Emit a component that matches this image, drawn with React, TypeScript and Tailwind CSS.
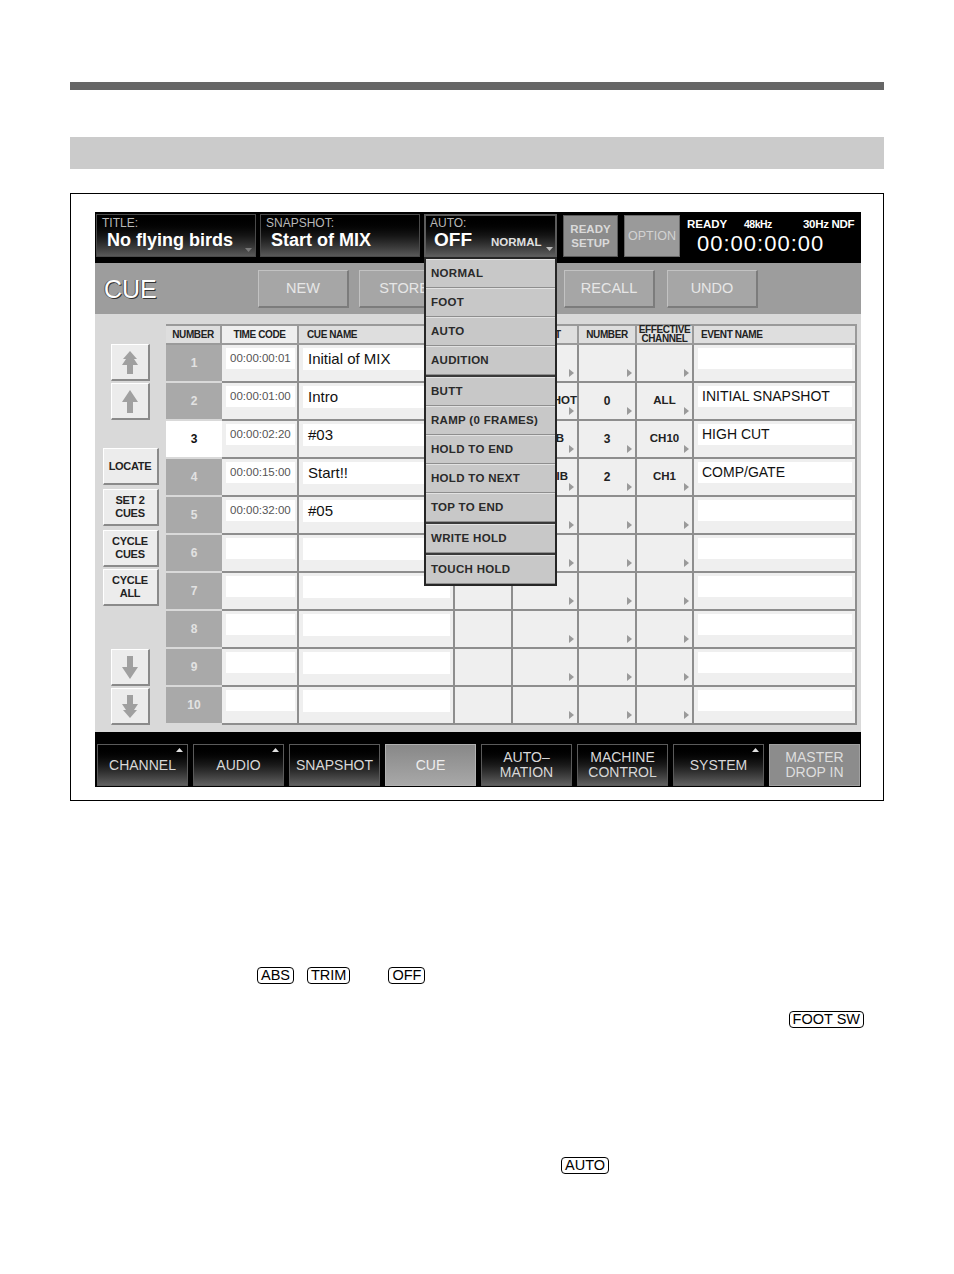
import React from "react";

const cols = "grid grid-cols-[56px_77px_156px_58px_66px_58px_57px_163px]";

const timeCodes = ["00:00:00:01", "00:00:01:00", "00:00:02:20", "00:00:15:00", "00:00:32:00"];
const cueNames = ["Initial of MIX", "Intro", "#03", "Start!!", "#05"];

interface EventRow {
  type: string;
  number: string;
  channel: string;
  name: string;
}

const events: Record<number, EventRow> = {
  2: { type: "SNAPSHOT", number: "0", channel: "ALL", name: "INITIAL SNAPSHOT" },
  3: { type: "EQ LIB", number: "3", channel: "CH10", name: "HIGH CUT" },
  4: { type: "DYN LIB", number: "2", channel: "CH1", name: "COMP/GATE" },
};

const menu = [
  ["NORMAL", "FOOT", "AUTO", "AUDITION"],
  ["BUTT", "RAMP (0 FRAMES)", "HOLD TO END", "HOLD TO NEXT", "TOP TO END"],
  ["WRITE HOLD"],
  ["TOUCH HOLD"],
];

const tabs = [
  { label: ["CHANNEL"], mark: true, style: "dark" },
  { label: ["AUDIO"], mark: true, style: "dark" },
  { label: ["SNAPSHOT"], mark: false, style: "dark" },
  { label: ["CUE"], mark: false, style: "active" },
  { label: ["AUTO–", "MATION"], mark: false, style: "dark" },
  { label: ["MACHINE", "CONTROL"], mark: false, style: "dark" },
  { label: ["SYSTEM"], mark: true, style: "dark" },
  { label: ["MASTER", "DROP IN"], mark: false, style: "grey" },
];

function Triangle() {
  return (
    <svg className="absolute bottom-[4px] right-[3px]" width="5" height="8" viewBox="0 0 5 8">
      <path d="M0 0 L5 4 L0 8 Z" fill="#9a9a9a" />
    </svg>
  );
}

function Arrow({ double, down }: { double?: boolean; down?: boolean }) {
  return (
    <svg className={down ? "rotate-180" : ""} width="16" height="23" viewBox="0 0 16 23">
      {double ? (
        <path d="M8 0 L15 8 L12 8 L16 14 L11 14 L11 23 L5 23 L5 14 L0 14 L4 8 L1 8 Z" fill="#a0a0a0" />
      ) : (
        <path d="M8 0 L16 12 L11 12 L11 23 L5 23 L5 12 L0 12 Z" fill="#a0a0a0" />
      )}
    </svg>
  );
}

const bevel =
  "bg-[#ececec] border-t border-l border-b-2 border-r-2 border-t-white border-l-white border-b-[#8a8a8a] border-r-[#8a8a8a]";

function SideButton({ children, className }: { children: React.ReactNode; className?: string }) {
  return (
    <div
      className={`${bevel} w-[56px] h-[37px] flex flex-col items-center justify-center text-[11px] font-bold leading-[13px] text-[#222] tracking-[-0.3px] ${className ?? ""}`}
    >
      {children}
    </div>
  );
}

function ArrowButton({ double, down, className }: { double?: boolean; down?: boolean; className?: string }) {
  return (
    <div className={`${bevel} w-[39px] h-[37px] flex items-center justify-center ${className ?? ""}`}>
      <Arrow double={double} down={down} />
    </div>
  );
}

function Row({ n }: { n: number }) {
  const ev = events[n];
  const tc = timeCodes[n - 1];
  const cue = cueNames[n - 1];
  const cell = "relative bg-[#efefef] border-r-2 border-b-2 border-[#8e8e8e]";
  return (
    <div className={`${cols} h-[38px]`}>
      <div
        className={`mb-[2px] flex items-center justify-center text-[12px] font-bold ${
          n === 3 ? "bg-white text-[#111]" : "bg-[#a9a9a9] text-[#e2e2e2]"
        }`}
      >
        {n}
      </div>
      <div className={`${cell} pt-[3px] pl-[4px] pr-[2px]`}>
        <div className="h-[21px] bg-white flex items-center pl-[4px] text-[11.5px] text-[#555]">{tc}</div>
      </div>
      <div className={`${cell} pt-[3px] pl-[4px] pr-[3px]`}>
        <div className="h-[22px] bg-white flex items-center pl-[5px] text-[15px] text-[#111]">{cue}</div>
      </div>
      <div className={cell} />
      <div className={`${cell} flex items-center justify-center text-[11.5px] font-bold text-[#222] whitespace-nowrap`}>
        {ev?.type}
        <Triangle />
      </div>
      <div className={`${cell} flex items-center justify-center text-[12px] font-bold text-[#222]`}>
        {ev?.number}
        <Triangle />
      </div>
      <div className={`${cell} flex items-center justify-center text-[11.5px] font-bold text-[#222]`}>
        {ev?.channel}
        <Triangle />
      </div>
      <div className={`${cell} pt-[3px] pl-[4px] pr-[3px]`}>
        <div className="h-[21px] bg-white flex items-center pl-[4px] text-[14px] text-[#111]">{ev?.name}</div>
      </div>
    </div>
  );
}

function HeaderRow() {
  const h =
    "bg-[#dedede] border-t-2 border-r-2 border-b-2 border-[#9a9a9a] flex items-center text-[10px] font-bold text-[#222] tracking-[-0.4px]";
  return (
    <div className={`${cols} h-[21px]`}>
      <div className={`${h} justify-center`}>NUMBER</div>
      <div className={`${h} justify-center bg-[#efefef]`}>TIME CODE</div>
      <div className={`${h} pl-[8px]`}>CUE NAME</div>
      <div className={`${h} justify-center`}>MODE</div>
      <div className={`${h} justify-center`}>EVENT</div>
      <div className={`${h} justify-center`}>NUMBER</div>
      <div className={`${h} flex-col justify-center text-[8.5px] leading-[8.5px]`}>
        <span>EFFECTIVE</span>
        <span>CHANNEL</span>
      </div>
      <div className={`${h} pl-[7px]`}>EVENT NAME</div>
    </div>
  );
}

function InfoBox({ label, value, className }: { label: string; value: string; className?: string }) {
  return (
    <div
      className={`relative w-[160px] h-[43px] border border-[#4a4a4a] bg-linear-to-b from-black via-[#151515] to-[#595959] pl-[5px] pt-[2px] ${className ?? ""}`}
    >
      <div className="text-[12px] leading-[12px] text-[#b8b8b8]">{label}</div>
      <div className="mt-[1px] pl-[5px] text-[18px] leading-[20px] font-bold text-white">{value}</div>
    </div>
  );
}

function Screen() {
  return (
    <div className="w-[766px] h-[575px] bg-black flex flex-col">
      {/* header */}
      <div className="h-[51px] flex items-start pt-[2px] pl-[1px]">
        <InfoBox label="TITLE:" value="No flying birds" />
        <div className="relative -ml-[160px] w-[160px] h-[43px] pointer-events-none">
          <svg className="absolute right-[4px] bottom-[5px]" width="7" height="4" viewBox="0 0 7 4">
            <path d="M0 0 L7 0 L3.5 4 Z" fill="#7a7a7a" />
          </svg>
        </div>
        <InfoBox label="SNAPSHOT:" value="Start of MIX" className="ml-[4px]" />
        <div className="relative ml-[4px] w-[133px] h-[43px]">
          <div className="w-[133px] h-[43px] border-2 border-[#5c5c5c] bg-linear-to-b from-black via-[#151515] to-[#595959] pl-[4px] pt-[1px] relative">
            <div className="text-[12px] leading-[12px] text-[#b8b8b8]">AUTO:</div>
            <div className="flex items-baseline pl-[4px] mt-[1px]">
              <span className="text-[19px] leading-[20px] font-bold text-white">OFF</span>
              <span className="ml-[19px] text-[11.5px] font-bold text-[#e0e0e0]">NORMAL</span>
            </div>
            <svg className="absolute right-[2px] bottom-[4px]" width="7" height="4" viewBox="0 0 7 4">
              <path d="M0 0 L7 0 L3.5 4 Z" fill="#bdbdbd" />
            </svg>
          </div>
          {/* dropdown */}
          <div className="absolute left-0 top-full z-50 w-[133px] border-2 border-[#262626] bg-[#3a3a3a] flex flex-col gap-[2px]">
            {menu.map((group, gi) => (
              <div key={gi} className="flex flex-col">
                {group.map((item) => (
                  <div
                    key={item}
                    className="h-[29px] bg-[#c8c8c8] border-t border-b border-t-[#e2e2e2] border-b-[#8e8e8e] flex items-center pl-[5px] text-[11.5px] font-bold text-[#2a2a2a] tracking-[0.3px] whitespace-nowrap"
                  >
                    {item}
                  </div>
                ))}
              </div>
            ))}
          </div>
        </div>
        <div className="ml-[6px] w-[55px] h-[42px] mt-[1px] bg-[#8c8c8c] border border-[#5a5a5a] flex flex-col items-center justify-center text-[11.5px] leading-[14px] font-bold text-[#dadada]">
          <span>READY</span>
          <span>SETUP</span>
        </div>
        <div className="ml-[6px] w-[56px] h-[42px] mt-[1px] bg-[#9a9a9a] border border-[#6a6a6a] flex items-center justify-center text-[12.5px] text-[#d2d2d2]">
          OPTION
        </div>
        <div className="ml-[6px] w-[174px] flex flex-col pt-[3px]">
          <div className="flex pl-[1px] text-[11.5px] leading-[14px] font-bold text-white">
            <span className="w-[57px]">READY</span>
            <span className="w-[59px] text-[10.5px] tracking-[-0.5px]">48kHz</span>
            <span className="tracking-[-0.3px]">30Hz NDF</span>
          </div>
          <div className="pl-[11px] mt-[1px] text-[22px] leading-[24px] tracking-[1px] text-white">00:00:00:00</div>
        </div>
      </div>

      {/* cue bar */}
      <div className="h-[51px] bg-[#9d9d9d] flex items-start">
        <div className="w-[163px] pl-[9px] pt-[12px] text-[25px] leading-[28px] text-white [text-shadow:1px_1px_0_#333,-1px_0_0_#555]">
          CUE
        </div>
        {[
          { t: "NEW", ml: "ml-0" },
          { t: "STORE", ml: "ml-[10px]" },
          { t: "DELETE", ml: "ml-[9px]" },
          { t: "RECALL", ml: "ml-[14px]" },
          { t: "UNDO", ml: "ml-[12px]" },
        ].map((b) => (
          <div
            key={b.t}
            className={`${b.ml} mt-[7px] w-[91px] h-[38px] bg-[#a6a6a6] border-t border-l border-b-2 border-r-2 border-t-[#c2c2c2] border-l-[#c2c2c2] border-b-[#7c7c7c] border-r-[#7c7c7c] flex items-center justify-center text-[14.5px] text-[#e6e6e6]`}
          >
            {b.t}
          </div>
        ))}
      </div>

      {/* main */}
      <div className="h-[418px] bg-[#d9d9d9] flex">
        <div className="w-[71px] flex flex-col items-center pt-[30px]">
          <ArrowButton double />
          <ArrowButton className="mt-[2px]" />
          <SideButton className="mt-[28px]">LOCATE</SideButton>
          <SideButton className="mt-[4px]">
            <span>SET 2</span>
            <span>CUES</span>
          </SideButton>
          <SideButton className="mt-[4px]">
            <span>CYCLE</span>
            <span>CUES</span>
          </SideButton>
          <SideButton className="mt-[2px]">
            <span>CYCLE</span>
            <span>ALL</span>
          </SideButton>
          <ArrowButton down className="mt-[43px]" />
          <ArrowButton double down className="mt-[2px]" />
        </div>
        <div className="pt-[10px]">
          <HeaderRow />
          {[1, 2, 3, 4, 5, 6, 7, 8, 9, 10].map((n) => (
            <Row key={n} n={n} />
          ))}
        </div>
      </div>

      {/* bottom tabs */}
      <div className="h-[55px] flex gap-[5px] pt-[12px] pl-[2px]">
        {tabs.map((t) => (
          <div
            key={t.label.join()}
            className={`relative w-[91px] h-[42px] border flex flex-col items-center justify-center text-[14px] leading-[15px] ${
              t.style === "active"
                ? "border-[#b0b0b0] bg-linear-to-b from-[#888] to-[#a8a8a8] text-[#eeeeee]"
                : t.style === "grey"
                ? "border-[#a0a0a0] bg-[#8c8c8c] text-[#dedede]"
                : "border-[#5a5a5a] bg-linear-to-b from-black via-[#1a1a1a] to-[#606060] text-[#d8d8d8]"
            }`}
          >
            {t.label.map((l) => (
              <span key={l}>{l}</span>
            ))}
            {t.mark && (
              <svg className="absolute top-[3px] right-[4px]" width="7" height="4" viewBox="0 0 7 4">
                <path d="M0 4 L3.5 0 L7 4 Z" fill="#e0e0e0" />
              </svg>
            )}
          </div>
        ))}
      </div>
    </div>
  );
}

function Key({ children, className }: { children: React.ReactNode; className?: string }) {
  return (
    <span
      className={`inline-block border border-black rounded-[4px] px-[3px] h-[17px] leading-[15px] text-[14.5px] text-black ${className ?? ""}`}
    >
      {children}
    </span>
  );
}

export default function App() {
  return (
    <div className="w-[954px] min-h-[1274px] bg-white font-['Liberation_Sans',Arial,sans-serif]">
      <div className="pt-[82px] px-[70px]">
        <div className="h-[8px] bg-[#666666]" />
        <div className="mt-[47px] h-[32px] bg-[#cbcbcb]" />
        <div className="mt-[24px] h-[608px] border border-black pl-[24px] pt-[18px]">
          <Screen />
        </div>
        <div className="mt-[166px] flex items-start">
          <Key className="ml-[187px]">ABS</Key>
          <Key className="ml-[13px]">TRIM</Key>
          <Key className="ml-[38px]">OFF</Key>
        </div>
        <div className="mt-[27px] flex justify-end pr-[20px]">
          <Key>FOOT SW</Key>
        </div>
        <div className="mt-[129px] flex">
          <Key className="ml-[491px]">AUTO</Key>
        </div>
      </div>
    </div>
  );
}
